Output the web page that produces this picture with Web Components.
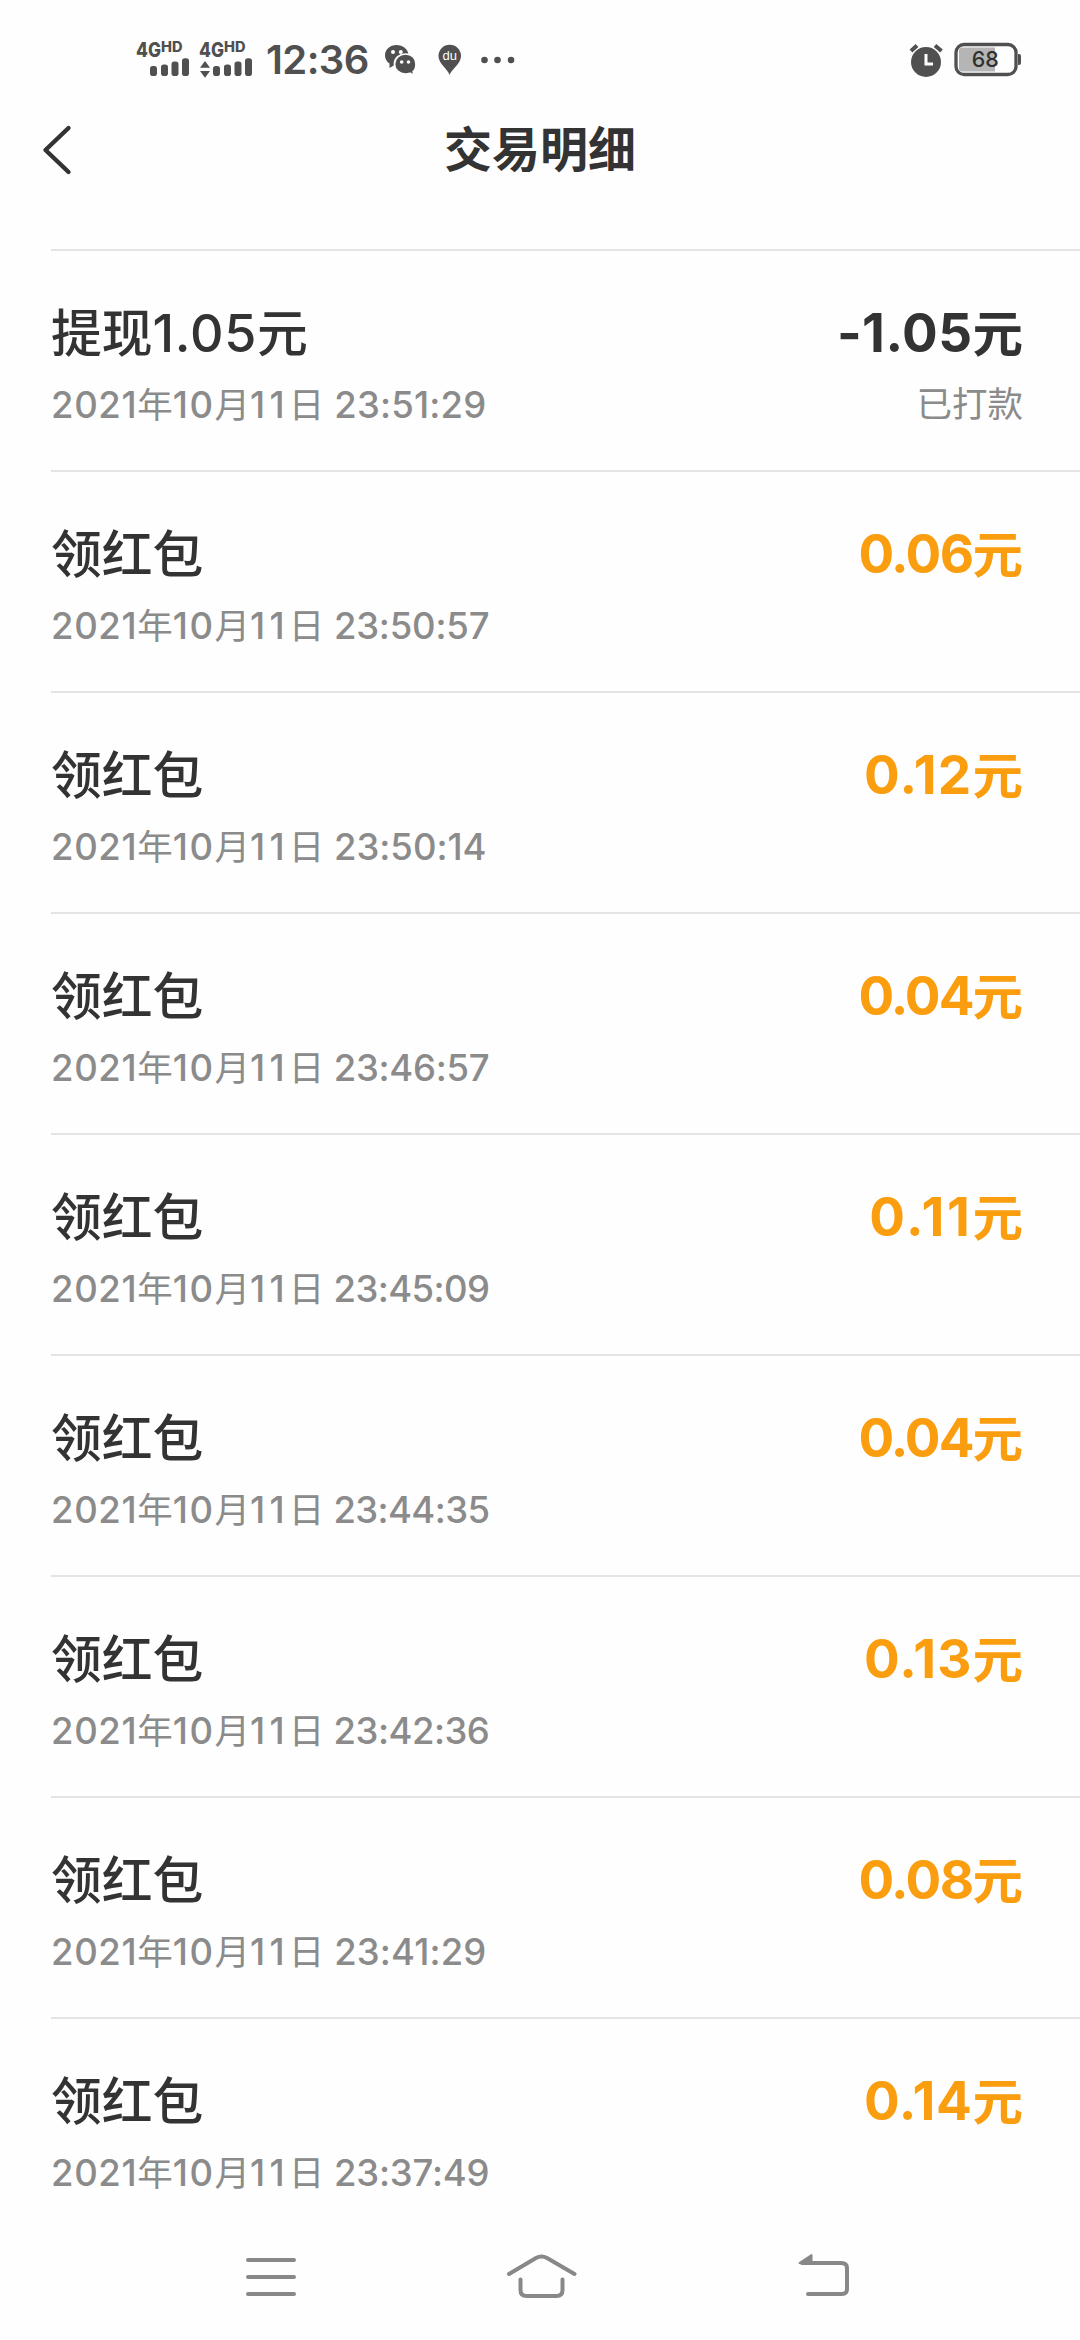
<!DOCTYPE html>
<html lang="zh-CN">
<head>
<meta charset="utf-8">
<title>交易明细</title>
<style>
html,body{margin:0;padding:0;background:#fefefe}
body{width:1080px;height:2340px;overflow:hidden;font-family:Inter,"Noto Sans CJK SC",sans-serif;color:#333}
</style>
</head>
<body>
<wallet-screen></wallet-screen>
<script>
const define = (name, html, setup) => customElements.define(name, class extends HTMLElement {
  connectedCallback() {
    if (this.shadowRoot) return;
    const t = document.createElement('template');
    t.innerHTML = html;
    this.attachShadow({mode: 'open'}).append(t.content.cloneNode(true));
    if (setup) setup(this, this.shadowRoot);
  }
});

define('signal-meter', `
<style>
:host{display:block;width:56px;height:46px}
svg{display:block;fill:#505050;overflow:visible}
text{font-family:Inter,sans-serif;font-weight:800}
</style>
<svg width="56" height="46" viewBox="0 -6 56 46">
<text x="0" y="15.700" font-size="20" textLength="25" lengthAdjust="spacingAndGlyphs">4G</text>
<text x="25" y="10.700" font-size="14" textLength="21.500" lengthAdjust="spacingAndGlyphs">HD</text>
<g><rect x="14" y="25" width="7" height="10" rx="2.8"/><rect x="25" y="23.500" width="7" height="11.500" rx="2.8"/><rect x="35.500" y="20.500" width="7" height="14.500" rx="2.8"/><rect x="46" y="17.300" width="7" height="17.700" rx="2.8"/></g>
<path class="arrows" d="M6 20l5 6.700H1zM1 30h10l-5 6.700z"/>
</svg>`, (el, root) => {
  if (!el.hasAttribute('data-active')) root.querySelector('.arrows').remove();
});

define('status-bar', `
<style>
:host{display:flex;height:96px;box-sizing:border-box;padding:0 58px 0 136px;align-items:flex-start;color:#505050}
signal-meter{margin-top:35px;margin-right:7px}
.clock{font-size:40px;font-weight:600;line-height:48px;margin:36px 0 0 1px;width:108px;white-space:nowrap;letter-spacing:-.6px;padding-left:3px}
svg{display:block}
.apps{margin:40px 0 0 10.500px}
.right{margin:40px 0 0 auto}
text{font-family:"Liberation Sans",sans-serif}
</style>
<signal-meter></signal-meter><signal-meter data-active></signal-meter>
<div class="clock">12:36</div>
<svg class="apps" width="134" height="40" viewBox="0 0 134 40" fill="#505050">
<path d="M11.500 5C5 5 0 9.500 0 15.500c0 3.500 1.700 6 4.500 8L4.500 28l5-3c7 1.500 14-3 14-9.500C23.500 9.500 18 5 11.500 5z"/>
<path d="M20.500 14c-6 0-11 4-11 10s5 10 11 10c1.800 0 3-.3 4.500-.8l3.800 2.300-.6-4C30.500 29.800 31 27 31 24c0-6-4.500-10-10.500-10z" stroke="#fefefe" stroke-width="1.700"/>
<circle cx="8" cy="12" r="2" fill="#fefefe"/><circle cx="15.800" cy="12" r="2" fill="#fefefe"/><circle cx="16.700" cy="22" r="1.800" fill="#fefefe"/><circle cx="23.500" cy="22" r="1.800" fill="#fefefe"/>
<path d="M64.500 35C63 29 53.500 24 53.500 16a11 11 0 0 1 22.500 0c0 8-9.500 13-11.500 19z"/>
<text x="64.800" y="20" font-size="13" text-anchor="middle" fill="#fefefe">du</text>
<circle cx="99.500" cy="20" r="3.300"/><circle cx="112.500" cy="20" r="3.300"/><circle cx="126" cy="20" r="3.300"/>
</svg>
<svg class="right" width="114" height="40" viewBox="0 0 114 40">
<circle cx="18" cy="22" r="15" fill="#505050"/>
<path d="M3 11l6-5.500M27 5.500l6.500 5.500" stroke="#505050" stroke-width="4"/>
<path d="M18 14v10h7" fill="none" stroke="#fefefe" stroke-width="3"/>
<rect x="48" y="4.500" width="60" height="30" rx="8" fill="#fefefe" stroke="#505050" stroke-width="3.300"/>
<path d="M54 7.500h33v24H54a3 3 0 0 1-3-3v-18a3 3 0 0 1 3-3z" fill="#b5b5b5"/>
<path d="M110 14h1a2 2 0 0 1 2 2v7a2 2 0 0 1-2 2h-1z" fill="#505050"/>
<text x="77.300" y="27" font-size="21.500" text-anchor="middle" fill="#303030" style="font-family:Inter;font-weight:500">68</text>
</svg>`);

define('title-bar', `
<style>
:host{display:grid;grid-template-columns:120px 1fr 120px;height:153px;align-items:start}
svg{display:block;margin:28px 0 0 40px}
h1{margin:15px 0 0;text-align:center;font-size:48px;line-height:70px;font-weight:600;font-family:"Noto Sans CJK SC",sans-serif}
</style>
<svg width="34" height="52" viewBox="0 0 34 52" fill="none" stroke="#333" stroke-width="4.400" stroke-linecap="round" stroke-linejoin="round"><path d="M28.500 4L5.500 26l23 22"/></svg>
<h1><slot></slot></h1>`);

// Advance widths in px of each kind of glyph, per text style.
const advances = {
  name:   {digit: 31.7, one: 27, '.': 14},
  amount: {digit: 33, one: 27.6, '.': 15, '-': 27},
  when:   {digit: 22.3, one: 19.4, ':': 9.6, ' ': 12}
};
const runWidth = (run, table) => [...run].reduce(
  (sum, c) => sum + (c === '1' ? table.one : table[c] || table.digit), 0);

define('record-row', `
<style>
:host{display:grid;grid-template-columns:1fr auto;grid-template-rows:60px 50px;row-gap:16px;align-content:start;box-sizing:border-box;height:221px;margin-left:51px;padding:53px 57px 0 0;border-top:2px solid #e4e4e4}
div{white-space:pre}
.name{font-size:50.800px;line-height:60px;font-weight:500}
.amount{font-size:50.500px;line-height:60px;margin-top:-1px;text-align:right;font-weight:600;color:#fa9d0f}
.amount b{font-size:53px;font-weight:700}
:host([out]) .amount{color:#333}
.when,.state{font-size:35.500px;line-height:50px;color:#8b8b8b}
.when b,.name b{font-weight:500}
.when b{font-size:36.500px}
.name b{font-size:52px}
.state{text-align:right}
</style>
<div class="name"></div><div class="amount"></div><div class="when"></div><div class="state"></div>`, (el, root) => {
  for (const key of ['name', 'amount', 'when', 'state']) {
    const box = root.querySelector('.' + key);
    for (const part of (el.getAttribute(key) || '').split(/([-\d.: ]+)/)) {
      if (!part) continue;
      if (/\d/.test(part)) {
        const b = document.createElement('b');
        b.textContent = part;
        box.append(b);
        const gap = runWidth(part, advances[key]) - b.getBoundingClientRect().width;
        b.style.letterSpacing = (gap / part.length).toFixed(3) + 'px';
      } else box.append(part);
    }
  }
});

define('nav-bar', `
<style>
:host{display:flex;justify-content:space-between;align-items:center;box-sizing:border-box;height:126px;padding:0 226px 0 241px;background:#fefefe}
svg{display:block;fill:none;stroke:#888;stroke-width:4;stroke-linecap:round;stroke-linejoin:round}
.home{margin-right:14px}
</style>
<svg width="60" height="60" viewBox="0 0 60 60"><path d="M7 13h46M7 30h46M7 47h46"/></svg>
<svg class="home" width="80" height="60" viewBox="0 0 80 60"><path d="M8 27L35 11q5.500-3 11 0L73.500 27M19.500 32.500V43q0 6 6 6h30q6 0 6-6V32.500"/></svg>
<svg width="60" height="60" viewBox="0 0 60 60"><path d="M8 16h39q6 0 6 5v21q0 5-5 5H14"/><path d="M5.500 16l12-8v8z" fill="#888" stroke-width="2"/></svg>`);

const records = [
  ['提现1.05元', '-1.05元', '23:51:29', '已打款'],
  ['领红包', '0.06元', '23:50:57'], ['领红包', '0.12元', '23:50:14'],
  ['领红包', '0.04元', '23:46:57'], ['领红包', '0.11元', '23:45:09'],
  ['领红包', '0.04元', '23:44:35'], ['领红包', '0.13元', '23:42:36'],
  ['领红包', '0.08元', '23:41:29'], ['领红包', '0.14元', '23:37:49']
];
define('wallet-screen', `
<style>
:host{display:flex;flex-direction:column;width:1080px;height:2340px;overflow:hidden;background:#fefefe}
main{flex:1;min-height:0;overflow:hidden}
status-bar,title-bar,nav-bar{flex:none}
</style>
<status-bar></status-bar><title-bar>交易明细</title-bar><main></main><nav-bar></nav-bar>`, (el, root) => {
  const main = root.querySelector('main');
  for (const [name, amount, time, state] of records) {
    const row = document.createElement('record-row');
    row.setAttribute('name', name);
    row.setAttribute('amount', amount);
    row.setAttribute('when', '2021年10月11日 ' + time);
    if (state) row.setAttribute('state', state);
    if (amount[0] === '-') row.setAttribute('out', '');
    main.append(row);
  }
});
</script>
</body>
</html>
